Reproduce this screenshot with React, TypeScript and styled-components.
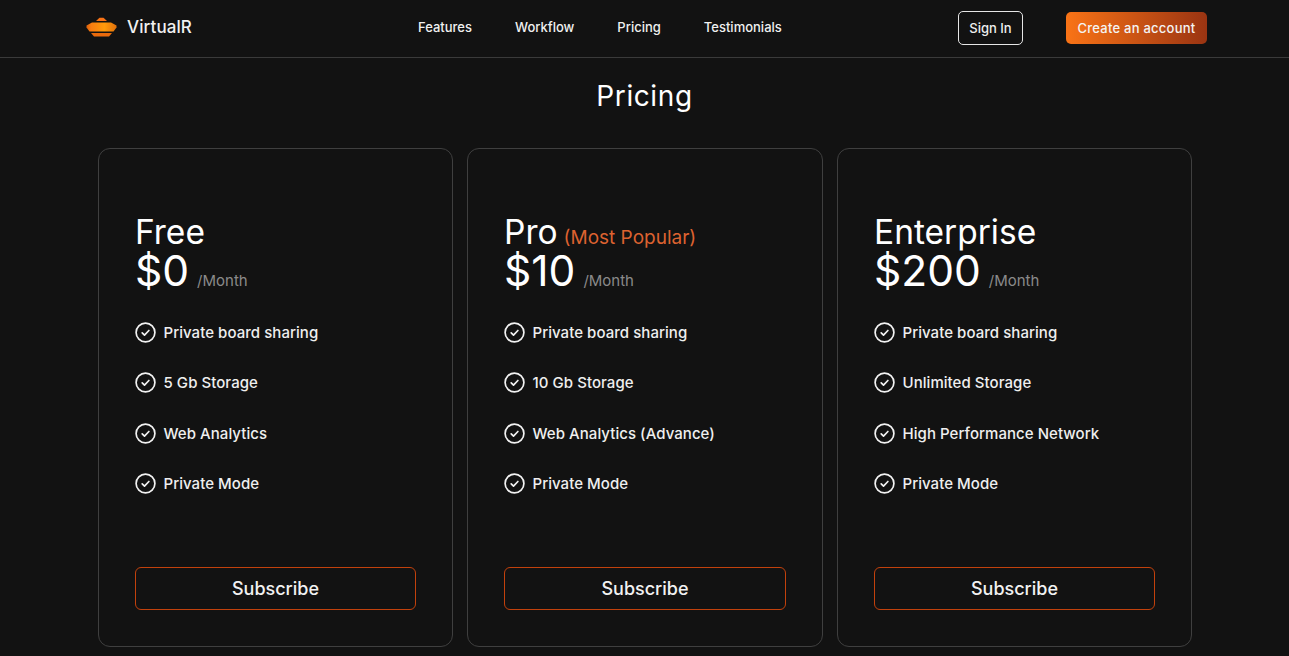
import React from "react";
import styled, { createGlobalStyle } from "styled-components";

const GlobalStyle = createGlobalStyle`
  * { box-sizing: border-box; }
  html, body { margin: 0; height: 656px; overflow: hidden; background: #121212; }
  body { font-family: Inter, "Liberation Sans", sans-serif; color: #fff; }
`;

const Header = styled.header`
  height: 58px;
  padding: 0 82px 3px 86px;
  display: flex;
  align-items: center;
  border-bottom: 1px solid #3a3a3a;
`;

const Brand = styled.div`
  width: 332px;
  display: flex;
  align-items: center;
  gap: 10px;
  font-size: 17px;
  font-weight: 500;
  color: #f1f1f1;
  letter-spacing: 0.1px;
`;

const Nav = styled.nav`
  display: flex;
  gap: 43px;
  a {
    font-size: 13px;
    font-weight: 500;
    color: #f0f0f0;
  }
`;

const Actions = styled.div`
  margin-left: auto;
  padding-top: 2px;
  display: flex;
  align-items: center;
  gap: 43px;
`;

const SignIn = styled.button`
  width: 65px;
  height: 34px;
  border: 1px solid #e6e6e6;
  border-radius: 5px;
  background: transparent;
  color: #eee;
  font: 500 13px Inter, sans-serif;
  padding: 0;
`;

const CreateAccount = styled.button`
  width: 141px;
  height: 32px;
  border: 0;
  border-radius: 5px;
  background: linear-gradient(90deg, #f97316, #9a3412);
  color: #f4f4f4;
  font: 500 13px Inter, sans-serif;
  letter-spacing: 0.25px;
  padding: 0;
`;

const Main = styled.main`
  padding: 20px 98px 0;
`;

const Title = styled.h1`
  margin: 0 0 34px;
  text-align: center;
  font-size: 28px;
  line-height: 36px;
  font-weight: 400;
  letter-spacing: 0.6px;
`;

const Plans = styled.div`
  display: grid;
  grid-template-columns: 355px 356px 355px;
  gap: 14px;
`;

const Card = styled.section`
  height: 499px;
  padding: 64px 36px 36px;
  border: 1px solid #3f3f3f;
  border-radius: 12px;
  display: flex;
  flex-direction: column;
`;

const PlanName = styled.h2`
  margin: 0;
  height: 39px;
  font-size: 33.5px;
  line-height: 38px;
  font-weight: 400;
  white-space: nowrap;
`;

const Tag = styled.span`
  margin-left: 6px;
  font-size: 19px;
  color: #dd6230;
`;

const PriceRow = styled.div`
  display: flex;
  align-items: baseline;
  gap: 8px;
  height: 40px;
  margin-bottom: 30.1px;
`;

const Price = styled.span`
  font-size: 42.5px;
  line-height: 38px;
  font-weight: 400;
`;

const Period = styled.span`
  font-size: 15px;
  color: #8a8a8a;
`;

const Features = styled.ul`
  margin: 0;
  padding: 0;
  list-style: none;
  display: flex;
  flex-direction: column;
  gap: 30px;
`;

const Feature = styled.li`
  display: flex;
  align-items: center;
  gap: 7.5px;
  height: 20.5px;
  font-size: 15px;
  font-weight: 500;
  letter-spacing: 0.05px;
  color: #efefef;
  white-space: nowrap;
`;

const Subscribe = styled.button`
  margin-top: auto;
  width: 100%;
  height: 43px;
  border: 1px solid #c2410c;
  border-radius: 6px;
  background: transparent;
  color: #f1f1f1;
  font: 500 18px Inter, sans-serif;
  padding: 0;
`;

const Logo = () => (
  <svg width="31" height="20" viewBox="0 0 31 20">
    <defs>
      <linearGradient id="lg" x1="0" x2="1" y1="0" y2="0">
        <stop offset="0" stopColor="#d9600c" />
        <stop offset="0.15" stopColor="#f97c10" />
        <stop offset="0.6" stopColor="#ff9a0a" />
        <stop offset="1" stopColor="#e0700c" />
      </linearGradient>
    </defs>
    <path d="M10 4 13.5 .8H17.5L21 4Z" fill="#f97316" />
    <path d="M6 5.6H25L30.5 8.6V10.5L27.5 14.6H3.5L.5 10.5V8.6Z" fill="url(#lg)" />
    <path d="M5 16.1H26L23 19.6H8Z" fill="#ea6a0c" />
  </svg>
);

const Check = () => (
  <svg width="21" height="21" viewBox="0 0 21 21" fill="none" stroke="#f2f2f2" strokeWidth="1.7">
    <circle cx="10.5" cy="10.5" r="9.4" />
    <path d="M7.2 10.8l2.3 2.3 4.4-4.6" strokeLinecap="round" strokeLinejoin="round" />
  </svg>
);

const plans = [
  { name: "Free", price: "$0", features: ["Private board sharing", "5 Gb Storage", "Web Analytics", "Private Mode"] },
  { name: "Pro", tag: "(Most Popular)", price: "$10", features: ["Private board sharing", "10 Gb Storage", "Web Analytics (Advance)", "Private Mode"] },
  { name: "Enterprise", price: "$200", features: ["Private board sharing", "Unlimited Storage", "High Performance Network", "Private Mode"] },
];

export default function App() {
  return (
    <>
      <GlobalStyle />
      <Header>
        <Brand>
          <Logo />
          VirtualR
        </Brand>
        <Nav>
          <a>Features</a>
          <a>Workflow</a>
          <a>Pricing</a>
          <a>Testimonials</a>
        </Nav>
        <Actions>
          <SignIn>Sign In</SignIn>
          <CreateAccount>Create an account</CreateAccount>
        </Actions>
      </Header>
      <Main>
        <Title>Pricing</Title>
        <Plans>
          {plans.map((plan) => (
            <Card key={plan.name}>
              <PlanName>
                {plan.name}
                {plan.tag && <Tag>{plan.tag}</Tag>}
              </PlanName>
              <PriceRow>
                <Price>{plan.price}</Price>
                <Period>/Month</Period>
              </PriceRow>
              <Features>
                {plan.features.map((f) => (
                  <Feature key={f}>
                    <Check />
                    {f}
                  </Feature>
                ))}
              </Features>
              <Subscribe>Subscribe</Subscribe>
            </Card>
          ))}
        </Plans>
      </Main>
    </>
  );
}
